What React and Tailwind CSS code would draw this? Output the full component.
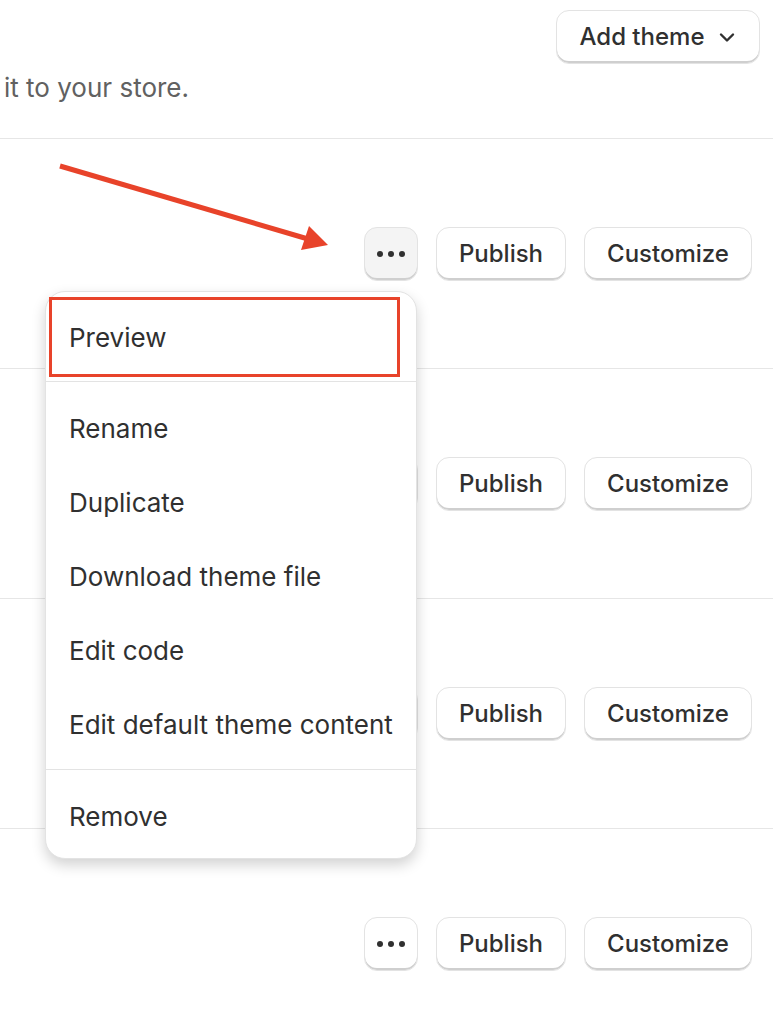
import React from 'react';

const font = { fontFamily: 'Inter, "Noto Sans", sans-serif' };

const Btn = ({ children, className = '' }) => (
  <button
    className={`h-[54px] rounded-[13px] border border-[#e3e3e3] bg-white text-[24px] font-medium text-[#303030] shadow-[inset_0_-2px_0_#cfcfcf] ${className}`}
  >
    {children}
  </button>
);

const Dots = ({ active }) => (
  <button
    className={`flex h-[54px] w-[54px] items-center justify-center gap-[5px] rounded-[13px] border border-[#e3e3e3] shadow-[inset_0_-2px_0_#cfcfcf] ${
      active ? 'bg-[#f4f4f4]' : 'bg-white'
    }`}
  >
    <span className="h-[6px] w-[6px] rounded-full bg-[#303030]" />
    <span className="h-[6px] w-[6px] rounded-full bg-[#303030]" />
    <span className="h-[6px] w-[6px] rounded-full bg-[#303030]" />
  </button>
);

const ThemeRow = ({ active }) => (
  <div className="flex h-[230px] shrink-0 items-center justify-end gap-[18px] border-t border-[#e6e6e6] pr-[21px]">
    <Dots active={active} />
    <Btn className="w-[130px]">Publish</Btn>
    <Btn className="w-[168px]">Customize</Btn>
  </div>
);

const Item = ({ children }) => (
  <div className="flex h-[74px] items-center pl-[23px] text-[26px] text-[#303030]">{children}</div>
);

export default function App() {
  return (
    <div className="relative h-[1028px] w-[773px] overflow-hidden bg-white" style={font}>
      {/* header */}
      <div className="flex h-[138px] flex-col">
        <div className="flex justify-end pr-[13px] pt-[10px]">
          <Btn className="flex w-[204px] items-center justify-center gap-[12px]">
            <span>Add theme</span>
            <svg width="20" height="20" viewBox="0 0 20 20" fill="none">
              <path d="M4 7.5l6 6 6-6" stroke="#303030" strokeWidth="2.4" strokeLinecap="round" strokeLinejoin="round" />
            </svg>
          </Btn>
        </div>
        <p className="mt-[4px] pl-[4px] text-[26px] text-[#616161]">it to your store.</p>
      </div>

      <ThemeRow active />
      <ThemeRow />
      <ThemeRow />
      <ThemeRow />

      {/* actions menu */}
      <div className="absolute left-[45px] top-[291px] w-[372px] rounded-[20px] border border-[#e3e3e3] bg-white shadow-[0_6px_14px_rgba(0,0,0,0.18)]">
        <div className="px-[3px] pb-[4px] pt-[5px]">
          <div className="flex h-[80px] w-[351px] items-center border-[3px] border-[#e8432a] pl-[17px] text-[26px] text-[#303030]">
            Preview
          </div>
        </div>
        <div className="border-t border-[#e3e3e3] pb-[8px] pt-[9px]">
          <Item>Rename</Item>
          <Item>Duplicate</Item>
          <Item>Download theme file</Item>
          <Item>Edit code</Item>
          <Item>Edit default theme content</Item>
        </div>
        <div className="border-t border-[#e3e3e3] pb-[5px] pt-[9px]">
          <Item>Remove</Item>
        </div>
      </div>

      {/* annotation arrow */}
      <svg className="pointer-events-none absolute left-0 top-0" width="773" height="1028">
        <line x1="60" y1="166" x2="308" y2="239" stroke="#e8432a" strokeWidth="5" />
        <polygon points="328,245 301,250 309,226" fill="#e8432a" />
      </svg>
    </div>
  );
}
